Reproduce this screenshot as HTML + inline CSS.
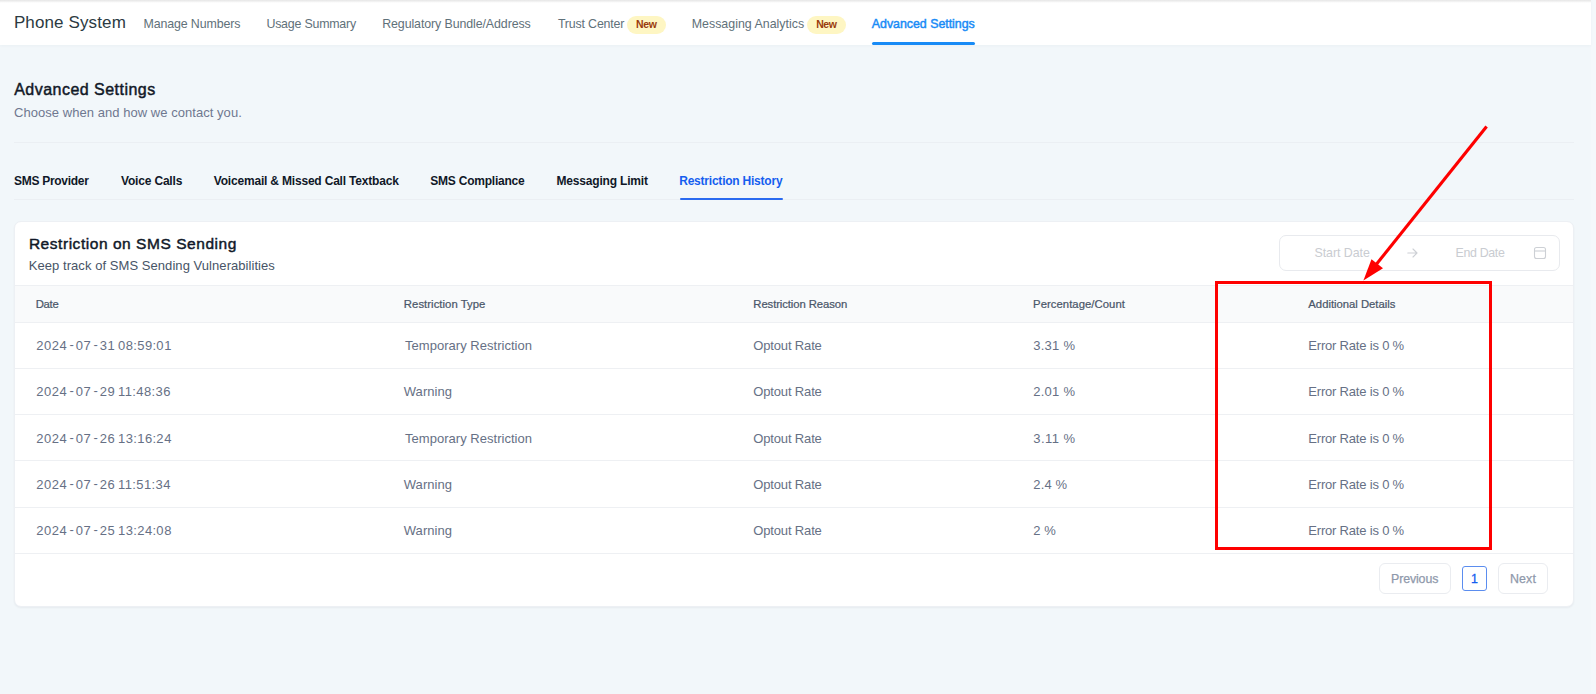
<!DOCTYPE html>
<html lang="en"><head><meta charset="utf-8"><title>Phone System - Advanced Settings</title>
<style>
html,body{margin:0;padding:0}
body{width:1596px;height:694px;overflow:hidden;position:relative;background:#f2f7fa;font-family:"Liberation Sans",sans-serif}
.t{position:absolute;white-space:nowrap;line-height:20px;height:20px;margin:0;padding:0;font-weight:400;text-decoration:none;display:block}
.abs{position:absolute}
.t i{font-style:normal}
.t i.h{margin:0 1.5px 0 2.1px;position:relative;top:-1px}
.t i.s{margin:0 -0.8px}
.t i.c{margin:0 -0.25px}
.topbar{left:0;top:0;width:1591px;height:3px;background:linear-gradient(#e7e7e7 0%,#ededed 35%,#f9f9f9 70%,#ffffff 100%)}
.header{left:0;top:0;width:1591px;height:45px;background:#fff;box-shadow:0 1px 3px rgba(40,60,80,.035)}
.rstrip{left:1591px;top:0;width:5px;height:694px;background:#f4f8fb}
.badge{height:18px;width:38.6px;border-radius:9px;background:#fef6c3;top:15.5px}
.nav-ul{left:872px;top:42.3px;width:103px;height:2.9px;background:#188bf6;border-radius:1.5px}
.divider{left:14px;width:1560px;height:1px;background:#ebeff3}
.tab-ul{left:679.5px;top:198px;width:103.5px;height:2px;background:#2a6af0;border-radius:1px}
.card{left:14px;top:221px;width:1558px;height:384px;background:#fff;border:1px solid #edf0f4;border-radius:7px;box-shadow:0 1px 2px rgba(16,24,40,.05);box-sizing:content-box}
.thead{left:15px;top:285px;width:1558px;height:36px;background:#f9fafb;border-top:1px solid #eef0f3;border-bottom:1px solid #eef0f3}
.hl{position:absolute;left:15px;width:1558px;height:1px;background:#eef0f3}
.picker{left:1279px;top:235px;width:279px;height:34px;border:1px solid #e8eaee;border-radius:7px;background:#fff}
.btn{border:1px solid #eaecf0;border-radius:6px;background:#fff;top:563px;height:29px}
.pg{left:1462px;top:566px;width:23px;height:23px;border:1px solid #5b8def;border-radius:3px;background:#fff}
.redbox{left:1215px;top:281px;width:271px;height:262.5px;border:3px solid #fe0000}
</style></head><body>
<div class="abs rstrip"></div>
<div class="abs header"></div>
<div class="abs topbar"></div>
<div class="abs badge" style="left:627.3px"></div>
<div class="abs badge" style="left:807.4px"></div>
<div class="abs nav-ul"></div>
<div class="abs divider" style="top:141.5px"></div>
<div class="abs divider" style="top:199px"></div>
<div class="abs tab-ul"></div>
<div class="abs card"></div>
<div class="abs thead"></div>
<div class="hl" style="top:368px"></div><div class="hl" style="top:414px"></div><div class="hl" style="top:460px"></div><div class="hl" style="top:507px"></div><div class="hl" style="top:553px"></div>
<div class="abs picker"></div>
<svg class="abs" style="left:1405px;top:247px" width="14" height="12" viewBox="0 0 14 12"><path d="M2.8 6H12M8 2l4 4-4 4" fill="none" stroke="#cdd0d5" stroke-width="1.1" stroke-linecap="round" stroke-linejoin="round"/></svg>
<svg class="abs" style="left:1533px;top:246px" width="14" height="14" viewBox="0 0 14 14"><rect x="1.5" y="1.5" width="11" height="11" rx="2" fill="none" stroke="#cdd0d5" stroke-width="1.1"/><path d="M1.5 5h11" stroke="#cdd0d5" stroke-width="1.1"/></svg>
<div class="abs btn" style="left:1379px;width:70px"></div>
<div class="abs btn" style="left:1498px;width:48px"></div>
<div class="abs pg"></div>
<header>
<h1 class="t" style="left:13.92px;top:13.00px;font-size:17px;font-weight:400;color:#2c3a42;letter-spacing:0.123px;">Phone System</h1>
<nav aria-label="Phone System">
<a class="t" style="left:143.50px;top:14.00px;font-size:12.4px;font-weight:400;color:#5f717a;letter-spacing:-0.124px;">Manage Numbers</a>
<a class="t" style="left:266.40px;top:14.00px;font-size:12.4px;font-weight:400;color:#5f717a;letter-spacing:-0.209px;">Usage Summary</a>
<a class="t" style="left:382.20px;top:14.00px;font-size:12.4px;font-weight:400;color:#5f717a;letter-spacing:-0.095px;">Regulatory Bundle/Address</a>
<a class="t" style="left:557.90px;top:14.00px;font-size:12.4px;font-weight:400;color:#5f717a;letter-spacing:-0.167px;">Trust Center</a>
<span class="t" style="left:636.08px;top:14.00px;font-size:10.5px;font-weight:700;color:#9a3c0c;letter-spacing:-0.389px;">New</span>
<a class="t" style="left:691.70px;top:14.00px;font-size:12.4px;font-weight:400;color:#5f717a;letter-spacing:0.011px;">Messaging Analytics</a>
<span class="t" style="left:816.18px;top:14.00px;font-size:10.5px;font-weight:700;color:#9a3c0c;letter-spacing:-0.389px;">New</span>
<a class="t" style="left:871.80px;top:14.00px;font-size:12.4px;font-weight:400;color:#188bf6;letter-spacing:-0.022px;-webkit-text-stroke:0.45px #188bf6;">Advanced Settings</a>
</nav>
</header>
<main>
<section>
<h2 class="t" style="left:14.16px;top:80.00px;font-size:16px;font-weight:700;color:#111827;letter-spacing:0.479px;font-weight:400;-webkit-text-stroke:0.45px #111827;">Advanced Settings</h2>
<p class="t" style="left:13.98px;top:103.00px;font-size:13px;font-weight:400;color:#6f7890;letter-spacing:0.047px;">Choose when and how we contact you.</p>
</section>
<nav role="tablist" aria-label="Advanced Settings">
<a role="tab" class="t" style="left:14.02px;top:171.00px;font-size:12px;font-weight:700;color:#101828;letter-spacing:-0.288px;">SMS Provider</a>
<a role="tab" class="t" style="left:121.00px;top:171.00px;font-size:12px;font-weight:700;color:#101828;letter-spacing:-0.178px;">Voice Calls</a>
<a role="tab" class="t" style="left:213.80px;top:171.00px;font-size:12px;font-weight:700;color:#101828;letter-spacing:-0.191px;">Voicemail &amp; Missed Call Textback</a>
<a role="tab" class="t" style="left:430.32px;top:171.00px;font-size:12px;font-weight:700;color:#101828;letter-spacing:-0.231px;">SMS Compliance</a>
<a role="tab" class="t" style="left:556.42px;top:171.00px;font-size:12px;font-weight:700;color:#101828;letter-spacing:-0.175px;">Messaging Limit</a>
<a role="tab" class="t" style="left:679.22px;top:171.00px;font-size:12px;font-weight:700;color:#155eef;letter-spacing:-0.222px;">Restriction History</a>
</nav>
<section>
<h3 class="t" style="left:28.88px;top:234.00px;font-size:15.5px;font-weight:400;color:#101828;letter-spacing:0.544px;-webkit-text-stroke:0.45px #101828;">Restriction on SMS Sending</h3>
<p class="t" style="left:28.78px;top:256.00px;font-size:13px;font-weight:400;color:#475467;letter-spacing:0.058px;">Keep track of SMS Sending Vulnerabilities</p>
<span class="t" style="left:1314.50px;top:243.00px;font-size:12.4px;font-weight:400;color:#c9ccd1;letter-spacing:-0.047px;">Start Date</span>
<span class="t" style="left:1455.50px;top:243.00px;font-size:12.4px;font-weight:400;color:#c9ccd1;letter-spacing:-0.329px;">End Date</span>
<div role="table" aria-label="Restriction on SMS Sending">
<div role="row">
<span role="columnheader" class="t" style="left:35.65px;top:294.00px;font-size:11.3px;font-weight:400;color:#4a5669;letter-spacing:-0.245px;-webkit-text-stroke:0.22px #4a5669;">Date</span>
<span role="columnheader" class="t" style="left:403.85px;top:294.00px;font-size:11.3px;font-weight:400;color:#4a5669;letter-spacing:0.049px;-webkit-text-stroke:0.22px #4a5669;">Restriction Type</span>
<span role="columnheader" class="t" style="left:753.35px;top:294.00px;font-size:11.3px;font-weight:400;color:#4a5669;letter-spacing:-0.095px;-webkit-text-stroke:0.22px #4a5669;">Restriction Reason</span>
<span role="columnheader" class="t" style="left:1033.05px;top:294.00px;font-size:11.3px;font-weight:400;color:#4a5669;letter-spacing:0.051px;-webkit-text-stroke:0.22px #4a5669;">Percentage/Count</span>
<span role="columnheader" class="t" style="left:1308.35px;top:294.00px;font-size:11.3px;font-weight:400;color:#4a5669;letter-spacing:-0.015px;-webkit-text-stroke:0.22px #4a5669;">Additional Details</span>
</div>
<div role="row">
<span role="cell" class="t" style="left:36.28px;top:336.00px;font-size:13px;font-weight:400;color:#667085;letter-spacing:0.540px;">2024<i class="h">-</i>07<i class="h">-</i>31<i class="s"> </i>08<i class="c">:</i>59<i class="c">:</i>01</span>
<span role="cell" class="t" style="left:405.00px;top:336.00px;font-size:13px;font-weight:400;color:#667085;letter-spacing:0.028px;">Temporary Restriction</span>
<span role="cell" class="t" style="left:753.28px;top:336.00px;font-size:13px;font-weight:400;color:#667085;letter-spacing:-0.152px;">Optout Rate</span>
<span role="cell" class="t" style="left:1033.28px;top:336.00px;font-size:13px;font-weight:400;color:#667085;letter-spacing:0.241px;">3.31 %</span>
<span role="cell" class="t" style="left:1308.28px;top:336.00px;font-size:13px;font-weight:400;color:#667085;letter-spacing:-0.193px;">Error Rate is 0 %</span>
</div>
<div role="row">
<span role="cell" class="t" style="left:36.28px;top:382.00px;font-size:13px;font-weight:400;color:#667085;letter-spacing:0.540px;">2024<i class="h">-</i>07<i class="h">-</i>29<i class="s"> </i>11<i class="c">:</i>48<i class="c">:</i>36</span>
<span role="cell" class="t" style="left:403.78px;top:382.00px;font-size:13px;font-weight:400;color:#667085;letter-spacing:0.059px;">Warning</span>
<span role="cell" class="t" style="left:753.28px;top:382.00px;font-size:13px;font-weight:400;color:#667085;letter-spacing:-0.152px;">Optout Rate</span>
<span role="cell" class="t" style="left:1033.28px;top:382.00px;font-size:13px;font-weight:400;color:#667085;letter-spacing:0.241px;">2.01 %</span>
<span role="cell" class="t" style="left:1308.28px;top:382.00px;font-size:13px;font-weight:400;color:#667085;letter-spacing:-0.193px;">Error Rate is 0 %</span>
</div>
<div role="row">
<span role="cell" class="t" style="left:36.28px;top:429.00px;font-size:13px;font-weight:400;color:#667085;letter-spacing:0.540px;">2024<i class="h">-</i>07<i class="h">-</i>26<i class="s"> </i>13<i class="c">:</i>16<i class="c">:</i>24</span>
<span role="cell" class="t" style="left:405.00px;top:429.00px;font-size:13px;font-weight:400;color:#667085;letter-spacing:0.028px;">Temporary Restriction</span>
<span role="cell" class="t" style="left:753.28px;top:429.00px;font-size:13px;font-weight:400;color:#667085;letter-spacing:-0.152px;">Optout Rate</span>
<span role="cell" class="t" style="left:1033.28px;top:429.00px;font-size:13px;font-weight:400;color:#667085;letter-spacing:0.435px;">3.11 %</span>
<span role="cell" class="t" style="left:1308.28px;top:429.00px;font-size:13px;font-weight:400;color:#667085;letter-spacing:-0.193px;">Error Rate is 0 %</span>
</div>
<div role="row">
<span role="cell" class="t" style="left:36.28px;top:475.00px;font-size:13px;font-weight:400;color:#667085;letter-spacing:0.540px;">2024<i class="h">-</i>07<i class="h">-</i>26<i class="s"> </i>11<i class="c">:</i>51<i class="c">:</i>34</span>
<span role="cell" class="t" style="left:403.78px;top:475.00px;font-size:13px;font-weight:400;color:#667085;letter-spacing:0.059px;">Warning</span>
<span role="cell" class="t" style="left:753.28px;top:475.00px;font-size:13px;font-weight:400;color:#667085;letter-spacing:-0.152px;">Optout Rate</span>
<span role="cell" class="t" style="left:1033.28px;top:475.00px;font-size:13px;font-weight:400;color:#667085;letter-spacing:0.160px;">2.4 %</span>
<span role="cell" class="t" style="left:1308.28px;top:475.00px;font-size:13px;font-weight:400;color:#667085;letter-spacing:-0.193px;">Error Rate is 0 %</span>
</div>
<div role="row">
<span role="cell" class="t" style="left:36.28px;top:521.00px;font-size:13px;font-weight:400;color:#667085;letter-spacing:0.540px;">2024<i class="h">-</i>07<i class="h">-</i>25<i class="s"> </i>13<i class="c">:</i>24<i class="c">:</i>08</span>
<span role="cell" class="t" style="left:403.78px;top:521.00px;font-size:13px;font-weight:400;color:#667085;letter-spacing:0.059px;">Warning</span>
<span role="cell" class="t" style="left:753.28px;top:521.00px;font-size:13px;font-weight:400;color:#667085;letter-spacing:-0.152px;">Optout Rate</span>
<span role="cell" class="t" style="left:1033.28px;top:521.00px;font-size:13px;font-weight:400;color:#667085;letter-spacing:0.092px;">2 %</span>
<span role="cell" class="t" style="left:1308.28px;top:521.00px;font-size:13px;font-weight:400;color:#667085;letter-spacing:-0.193px;">Error Rate is 0 %</span>
</div>
</div>
<nav aria-label="Pagination">
<span class="t" style="left:1391.00px;top:569.00px;font-size:12.4px;font-weight:400;color:#8f99ab;letter-spacing:-0.121px;-webkit-text-stroke:0.25px #8f99ab;">Previous</span>
<span class="t" style="left:1471.00px;top:569.00px;font-size:12.4px;font-weight:400;color:#155eef;letter-spacing:0.000px;-webkit-text-stroke:0.3px #155eef;">1</span>
<span class="t" style="left:1510.00px;top:569.00px;font-size:12.4px;font-weight:400;color:#8f99ab;letter-spacing:0.129px;-webkit-text-stroke:0.25px #8f99ab;">Next</span>
</nav>
</section>
</main>
<div class="abs redbox"></div>
<svg class="abs" style="left:1340px;top:110px" width="170" height="180" viewBox="1340 110 170 180"><line x1="1486.6" y1="126.5" x2="1375" y2="266" stroke="#fe0000" stroke-width="3.1"/><polygon points="1363.4,280.5 1371.5,259.2 1383,268.2" fill="#fe0000"/></svg>
</body></html>
